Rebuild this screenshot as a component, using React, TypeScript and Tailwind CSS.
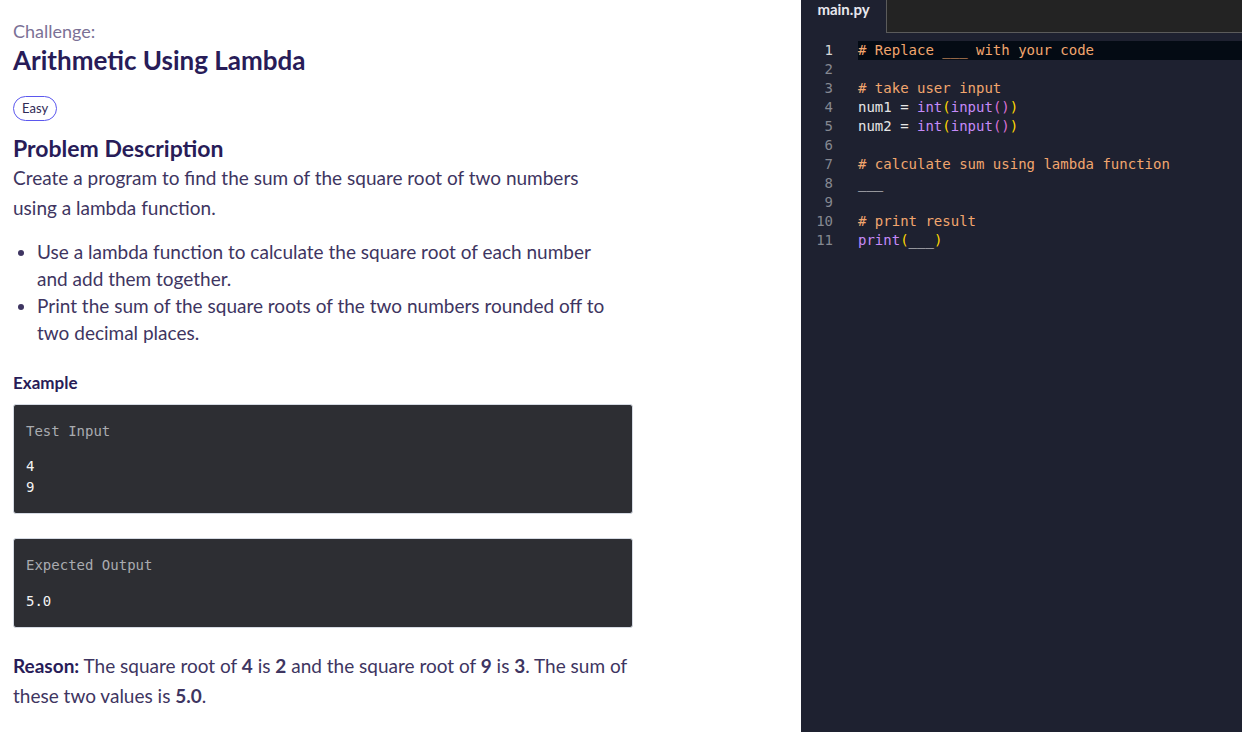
const codeLines: { n: number; parts: [string, string][] }[] = [
  { n: 1, parts: [["# Replace ___ with your code", "text-[#f2a66e]"]] },
  { n: 2, parts: [] },
  { n: 3, parts: [["# take user input", "text-[#f2a66e]"]] },
  {
    n: 4,
    parts: [
      ["num1 = ", "text-[#e6e6e6]"],
      ["int", "text-[#c58af9]"],
      ["(", "text-[#ffd700]"],
      ["input", "text-[#c58af9]"],
      ["()", "text-[#da70d6]"],
      [")", "text-[#ffd700]"],
    ],
  },
  {
    n: 5,
    parts: [
      ["num2 = ", "text-[#e6e6e6]"],
      ["int", "text-[#c58af9]"],
      ["(", "text-[#ffd700]"],
      ["input", "text-[#c58af9]"],
      ["()", "text-[#da70d6]"],
      [")", "text-[#ffd700]"],
    ],
  },
  { n: 6, parts: [] },
  { n: 7, parts: [["# calculate sum using lambda function", "text-[#f2a66e]"]] },
  { n: 8, parts: [["___", "text-[#e6e6e6]"]] },
  { n: 9, parts: [] },
  { n: 10, parts: [["# print result", "text-[#f2a66e]"]] },
  {
    n: 11,
    parts: [
      ["print", "text-[#c58af9]"],
      ["(", "text-[#ffd700]"],
      ["___", "text-[#e6e6e6]"],
      [")", "text-[#ffd700]"],
    ],
  },
];

function ExampleBox({ label, lines, gap }: { label: string; lines: string[]; gap: string }) {
  return (
    <div className="rounded-[3px] border border-[#d5dae3] bg-[#2d2e33] px-[12px] pt-[16px] pb-[15px] font-['DejaVu_Sans_Mono',monospace] text-[14px]">
      <div className="leading-[21px] text-[#a9abb0]">{label}</div>
      <div className={`${gap} leading-[21px] text-[#f3f3f3]`}>
        {lines.map((l) => (
          <div key={l}>{l}</div>
        ))}
      </div>
    </div>
  );
}

export default function App() {
  return (
    <div className="flex h-[732px] w-[1242px] overflow-hidden bg-white">
      {/* Problem statement */}
      <div className="w-[801px] shrink-0 pl-[13px] pt-[19px] font-['Lato',sans-serif] text-[#3e3561]">
        <div className="w-[620px]">
          <div className="text-[18px] leading-[24px] text-[#7b7196]">Challenge:</div>
          <h1 className="text-[26px] font-bold leading-[34px] text-[#281c58]">
            Arithmetic Using Lambda
          </h1>
          <span className="mt-[19px] inline-block rounded-full border border-[#5b57ee] px-[8px] py-[3px] text-[13px] leading-[17px] text-[#2f2a55]">
            Easy
          </span>
          <h2 className="mt-[12px] text-[23px] font-bold leading-[30px] text-[#281c58]">
            Problem Description
          </h2>
          <p className="w-[587px] text-[19px] leading-[30px]">
            Create a program to find the sum of the square root of two numbers using a lambda
            function.
          </p>
          <ul className="mt-[15px] w-[600px] list-disc pl-[24px] text-[19px] leading-[27px] marker:text-[#3e3561]">
            <li>Use a lambda function to calculate the square root of each number and add them together.</li>
            <li>Print the sum of the square roots of the two numbers rounded off to two decimal places.</li>
          </ul>
          <h3 className="mt-[26px] text-[17px] font-bold leading-[22px] text-[#281c58]">Example</h3>
          <div className="mt-[10px]">
            <ExampleBox label="Test Input" lines={["4", "9"]} gap="mt-[14px]" />
          </div>
          <div className="mt-[24px]">
            <ExampleBox label="Expected Output" lines={["5.0"]} gap="mt-[15px]" />
          </div>
          <p className="mt-[23px] text-[19px] leading-[30px]">
            <b className="text-[#281c58]">Reason:</b> The square root of <b>4</b> is <b>2</b> and the
            square root of <b>9</b> is <b>3</b>. The sum of these two values is <b>5.0</b>.
          </p>
        </div>
      </div>

      {/* Editor */}
      <div className="flex flex-1 flex-col bg-[#1e2130]">
        <div className="flex h-[33px] shrink-0">
          <div className="flex w-[85px] items-start justify-center font-['Lato',sans-serif] text-[15px] font-bold leading-[18px] text-[#e8e8ee]">
            main.py
          </div>
          <div className="flex-1 border-b border-l border-[#5b5b5b] bg-[#232323]" />
        </div>
        <div className="pt-[8px] font-['DejaVu_Sans_Mono',monospace] text-[14px]">
          {codeLines.map((line) => (
            <div key={line.n} className="flex h-[19px] items-center leading-[19px]">
              <div
                className={`w-[32px] shrink-0 text-right ${
                  line.n === 1 ? "text-[#d8d8d8]" : "text-[#858891]"
                }`}
              >
                {line.n}
              </div>
              <div
                className={`ml-[25px] h-full flex-1 whitespace-pre ${
                  line.n === 1 ? "bg-[#040b14]" : ""
                }`}
              >
                {line.parts.map(([t, c], i) => (
                  <span key={i} className={c}>
                    {t}
                  </span>
                ))}
              </div>
            </div>
          ))}
        </div>
      </div>
    </div>
  );
}
